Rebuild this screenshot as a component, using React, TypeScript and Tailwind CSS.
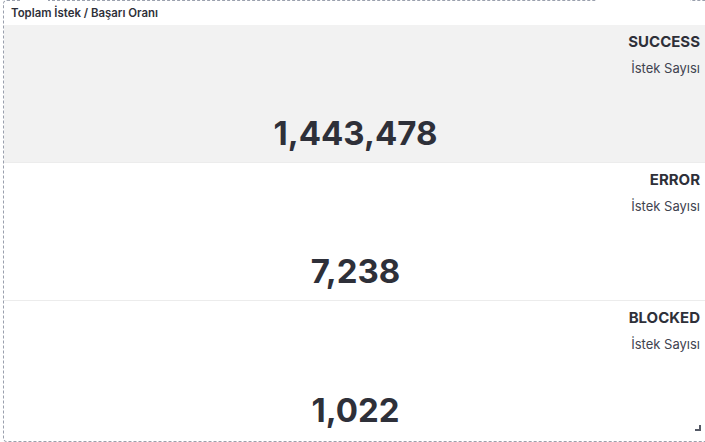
import React from "react";

type Stat = {
  label: string;
  value: number;
  shaded?: boolean;
};

const STATS: Stat[] = [
  { label: "SUCCESS", value: 1443478, shaded: true },
  { label: "ERROR", value: 7238 },
  { label: "BLOCKED", value: 1022 },
];

const fmt = (n: number) => n.toLocaleString("en-US");

const StatPanel = ({ stat, last }: { stat: Stat; last: boolean }) => (
  <div
    className={`flex h-[138px] flex-col ${stat.shaded ? "bg-[#f2f2f2]" : "bg-white"} ${
      last ? "" : "border-b border-[#ececec]"
    }`}
  >
    <div className="flex flex-col items-end pr-[7px] pt-[8px]">
      <span className="text-[15px] font-bold leading-[18px] text-[#2e3039]">{stat.label}</span>
      <span className="mt-[8px] text-[13px] leading-[18px] text-[#3f4350]">İstek Sayısı</span>
    </div>
    <div className="mt-auto pb-[9px] text-center text-[33px] font-bold leading-[40px] text-[#2e3039]">
      {fmt(stat.value)}
    </div>
  </div>
);

export default function App() {
  return (
    <div className="h-[442px] w-[705px] overflow-hidden bg-white font-['Inter',sans-serif]">
      <div className="relative ml-[3px] h-[442px] w-[705px] rounded-[4px] border border-dashed border-[#9aa0ad]">
        {/* breaks in the frame's top edge */}
        <span className="absolute -top-[2px] left-[17px] h-[3px] w-[27px] bg-white" />
        <span className="absolute -top-[2px] left-[592px] h-[3px] w-[94px] bg-white" />

        <div className="flex h-[24px] items-center pl-[7px] pt-[2px] text-[11.4px] font-semibold text-[#2e3039]">
          Toplam İstek / Başarı Oranı
        </div>

        {STATS.map((s, i) => (
          <StatPanel key={s.label} stat={s} last={i === STATS.length - 1} />
        ))}

        {/* resize handle */}
        <span className="absolute left-[691px] top-[424px] h-[6px] w-[6px] border-b-2 border-r-2 border-[#555a66]" />
      </div>
    </div>
  );
}
